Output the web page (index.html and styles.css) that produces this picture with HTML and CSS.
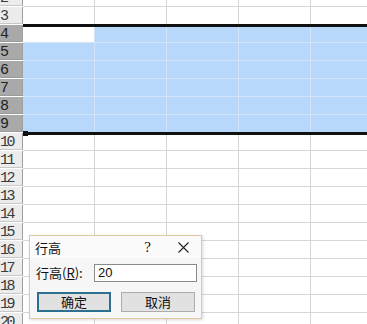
FILE: index.html
```html
<!DOCTYPE html>
<html lang="zh-CN">
<head>
    <meta charset="UTF-8">
    <title>行高</title>
    <link rel="stylesheet" href="styles.css">
</head>
<body>
    <div class="sheet">
        <div class="row"><div class="hd">2</div><div class="cell"></div><div class="cell"></div><div class="cell"></div><div class="cell"></div><div class="cell"></div></div>
        <div class="row"><div class="hd">3</div><div class="cell"></div><div class="cell"></div><div class="cell"></div><div class="cell"></div><div class="cell"></div></div>
        <div class="selection">
            <div class="row sel"><div class="hd">4</div><div class="cell active"></div><div class="cell"></div><div class="cell"></div><div class="cell"></div><div class="cell"></div></div>
            <div class="row sel"><div class="hd">5</div><div class="cell"></div><div class="cell"></div><div class="cell"></div><div class="cell"></div><div class="cell"></div></div>
            <div class="row sel"><div class="hd">6</div><div class="cell"></div><div class="cell"></div><div class="cell"></div><div class="cell"></div><div class="cell"></div></div>
            <div class="row sel"><div class="hd">7</div><div class="cell"></div><div class="cell"></div><div class="cell"></div><div class="cell"></div><div class="cell"></div></div>
            <div class="row sel"><div class="hd">8</div><div class="cell"></div><div class="cell"></div><div class="cell"></div><div class="cell"></div><div class="cell"></div></div>
            <div class="row sel"><div class="hd">9</div><div class="cell"></div><div class="cell"></div><div class="cell"></div><div class="cell"></div><div class="cell"></div></div>
            <span class="handle"></span>
        </div>
        <div class="row"><div class="hd">10</div><div class="cell"></div><div class="cell"></div><div class="cell"></div><div class="cell"></div><div class="cell"></div></div>
        <div class="row"><div class="hd">11</div><div class="cell"></div><div class="cell"></div><div class="cell"></div><div class="cell"></div><div class="cell"></div></div>
        <div class="row"><div class="hd">12</div><div class="cell"></div><div class="cell"></div><div class="cell"></div><div class="cell"></div><div class="cell"></div></div>
        <div class="row"><div class="hd">13</div><div class="cell"></div><div class="cell"></div><div class="cell"></div><div class="cell"></div><div class="cell"></div></div>
        <div class="row"><div class="hd">14</div><div class="cell"></div><div class="cell"></div><div class="cell"></div><div class="cell"></div><div class="cell"></div></div>
        <div class="row"><div class="hd">15</div><div class="cell"></div><div class="cell"></div><div class="cell"></div><div class="cell"></div><div class="cell"></div></div>
        <div class="row"><div class="hd">16</div><div class="cell"></div><div class="cell"></div><div class="cell"></div><div class="cell"></div><div class="cell"></div></div>
        <div class="row"><div class="hd">17</div><div class="cell"></div><div class="cell"></div><div class="cell"></div><div class="cell"></div><div class="cell"></div></div>
        <div class="row"><div class="hd">18</div><div class="cell"></div><div class="cell"></div><div class="cell"></div><div class="cell"></div><div class="cell"></div></div>
        <div class="row"><div class="hd">19</div><div class="cell"></div><div class="cell"></div><div class="cell"></div><div class="cell"></div><div class="cell"></div></div>
        <div class="row"><div class="hd">20</div><div class="cell"></div><div class="cell"></div><div class="cell"></div><div class="cell"></div><div class="cell"></div></div>
    </div>

    <div class="dialog">
        <div class="titlebar">
            <span class="title">行高</span>
            <span class="help">?</span>
            <svg class="close" width="11" height="11" viewBox="0 0 11 11">
                <path d="M0.5 0.5 L10.5 10.5 M10.5 0.5 L0.5 10.5" stroke="#222" stroke-width="1.1" fill="none"/>
            </svg>
        </div>
        <div class="field">
            <span class="label">行高(<u>R</u>):</span>
            <div class="input">20</div>
        </div>
        <div class="buttons">
            <div class="btn default">确定</div>
            <div class="btn">取消</div>
        </div>
    </div>
</body>
</html>
```

FILE: styles.css
```css
body {
    margin: 0;
    overflow: hidden;
    background: #fff;
    font-family: "Noto Sans CJK SC", sans-serif;
}

.sheet {
    margin-top: -11px;
}

.row {
    display: flex;
    height: 18px;
}

.hd {
    flex: none;
    width: 23px;
    height: 17px;
    box-sizing: border-box;
    padding-left: 0;
    border-right: 1px solid #a0a0a0;
    border-bottom: 1px solid #c8c8c8;
    background: #ececec;
    color: #3c3c3c;
    font-family: "Liberation Mono", monospace;
    font-size: 15px;
    letter-spacing: -2.4px;
    line-height: 19px;
    overflow: hidden;
}

.cell {
    flex: none;
    width: 71px;
    height: 17px;
    border-right: 1px solid #d6d6d6;
    border-bottom: 1px solid #d6d6d6;
}

.selection {
    position: relative;
}

.selection::after {
    content: "";
    position: absolute;
    left: 23px;
    right: 0;
    top: -1px;
    bottom: -2px;
    border-top: 3px solid #111;
    border-bottom: 3px solid #111;
}

.sel .hd {
    background: #a9a9a9;
    color: #222;
    border-bottom-color: #9a9a9a;
}

.sel .cell {
    background: #b7d8fa;
    border-right-color: #d2e5f9;
    border-bottom-color: #d2e5f9;
}

.sel .cell.active {
    background: #fff;
}

.handle {
    position: absolute;
    left: 23px;
    bottom: -3px;
    width: 5px;
    height: 5px;
    background: #111;
    z-index: 1;
}

.dialog {
    position: absolute;
    left: 29px;
    top: 235px;
    width: 173px;
    height: 84px;
    box-sizing: border-box;
    border: 1px solid #e2c89f;
    background: #f6f6f6;
    box-shadow: 1px 1px 3px rgba(0, 0, 0, 0.15);
    font-size: 13px;
    color: #111;
}

.titlebar {
    display: flex;
    align-items: center;
    height: 22px;
    padding-left: 5px;
    background: #fbfbfb;
}

.title {
    flex: 1;
}

.help {
    font-family: "Liberation Serif", serif;
    font-size: 15px;
    margin-right: 27px;
}

.close {
    margin-right: 12px;
}

.field {
    display: flex;
    align-items: center;
    margin-top: 5px;
    padding-left: 6px;
}

.label {
    width: 58px;
}

.input {
    width: 98px;
    height: 16px;
    border: 1px solid #8a8a8a;
    background: #fff;
    padding-left: 3px;
    line-height: 16px;
    font-family: "Liberation Sans", sans-serif;
    font-size: 13px;
}

.buttons {
    display: flex;
    gap: 10px;
    margin-top: 10px;
    padding-left: 7px;
}

.btn {
    width: 72px;
    height: 18px;
    border: 1px solid #adadad;
    background: #e1e1e1;
    text-align: center;
    line-height: 18px;
}

.btn.default {
    border: 2px solid #2d6f91;
    width: 70px;
    height: 16px;
    line-height: 16px;
}
```
